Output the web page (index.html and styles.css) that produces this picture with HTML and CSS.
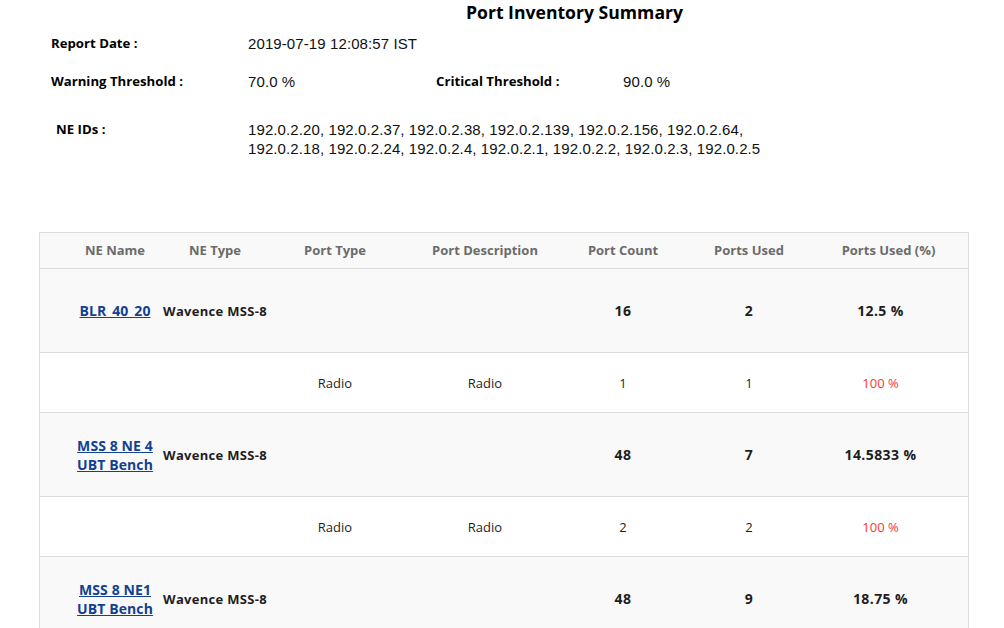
FILE: index.html
```html
<!DOCTYPE html>
<html>
<head>
<meta charset="utf-8">
<title>Port Inventory Summary</title>
<link rel="stylesheet" href="styles.css">
</head>
<body>
<div class="report">
  <h1 class="title">Port Inventory Summary</h1>
  <div class="info">
    <div class="label">Report Date :</div>
    <div class="value span3">2019-07-19 12:08:57 IST</div>

    <div class="label">Warning Threshold :</div>
    <div class="value">70.0 %</div>
    <div class="label">Critical Threshold :</div>
    <div class="value">90.0 %</div>

    <div class="label indent">NE IDs :</div>
    <div class="value span3 ids">192.0.2.20, 192.0.2.37, 192.0.2.38, 192.0.2.139, 192.0.2.156, 192.0.2.64,<br>192.0.2.18, 192.0.2.24, 192.0.2.4, 192.0.2.1, 192.0.2.2, 192.0.2.3, 192.0.2.5</div>
  </div>

  <div class="table-wrap">
    <table class="inv">
      <colgroup>
        <col class="c1"><col class="c2"><col class="c3"><col class="c4"><col class="c5"><col class="c6"><col class="c7">
      </colgroup>
      <thead>
        <tr>
          <th class="first">NE Name</th>
          <th>NE Type</th>
          <th>Port Type</th>
          <th>Port Description</th>
          <th>Port Count</th>
          <th>Ports Used</th>
          <th class="last">Ports Used (%)</th>
        </tr>
      </thead>
      <tbody>
        <tr class="ne">
          <td class="first"><a href="#" class="ne-link">BLR_40_20</a></td>
          <td>Wavence MSS-8</td>
          <td></td>
          <td></td>
          <td class="num">16</td>
          <td class="num">2</td>
          <td class="num last">12.5 %</td>
        </tr>
        <tr class="port">
          <td class="first"></td>
          <td></td>
          <td>Radio</td>
          <td>Radio</td>
          <td>1</td>
          <td>1</td>
          <td class="last crit">100 %</td>
        </tr>
        <tr class="ne">
          <td class="first"><a href="#" class="ne-link">MSS 8 NE 4 UBT Bench</a></td>
          <td>Wavence MSS-8</td>
          <td></td>
          <td></td>
          <td class="num">48</td>
          <td class="num">7</td>
          <td class="num last">14.5833 %</td>
        </tr>
        <tr class="port">
          <td class="first"></td>
          <td></td>
          <td>Radio</td>
          <td>Radio</td>
          <td>2</td>
          <td>2</td>
          <td class="last crit">100 %</td>
        </tr>
        <tr class="ne">
          <td class="first"><a href="#" class="ne-link">MSS 8 NE1 UBT Bench</a></td>
          <td>Wavence MSS-8</td>
          <td></td>
          <td></td>
          <td class="num">48</td>
          <td class="num">9</td>
          <td class="num last">18.75 %</td>
        </tr>
        <tr class="port">
          <td class="first"></td>
          <td></td>
          <td>Radio</td>
          <td>Radio</td>
          <td>2</td>
          <td>2</td>
          <td class="last crit">100 %</td>
        </tr>
      </tbody>
    </table>
  </div>
</div>
</body>
</html>
```

FILE: styles.css
```css
html, body {
  margin: 0;
  padding: 0;
  background: #ffffff;
}

body {
  font-family: "Open Sans", "Noto Sans", sans-serif;
  color: #000;
}

.report {
  width: 1004px;
}

.title {
  margin: 0;
  padding: 0 0 0 145px;
  height: 24px;
  text-align: center;
  font-family: "Open Sans", sans-serif;
  font-weight: 700;
  font-size: 17.6px;
  line-height: 24px;
  color: #000;
}

.info {
  display: grid;
  grid-template-columns: 197px 188px 187px 1fr;
  padding-left: 51px;
  margin-top: 10px;
}

.label {
  font-family: "Open Sans", sans-serif;
  font-weight: 700;
  font-size: 13.2px;
  line-height: 19px;
  color: #000;
  margin-bottom: 19px;
}

.label.indent {
  padding-left: 5px;
  margin-top: 10px;
}

.value {
  font-family: "Liberation Sans", Arial, sans-serif;
  font-size: 15px;
  letter-spacing: 0.1px;
  line-height: 19px;
  color: #111;
  margin-bottom: 19px;
}

.value.span3 {
  grid-column: span 3;
}

.value.ids {
  margin-top: 10px;
}

.table-wrap {
  margin: 55px 0 0 39px;
  width: 928px;
  border: 1px solid #dddddd;
  border-bottom: none;
}

.inv {
  width: 928px;
  border-collapse: collapse;
  table-layout: fixed;
  font-family: "Open Sans", "Noto Sans", sans-serif;
  font-size: 13px;
}

.c1 { width: 123px; }
.c2 { width: 104px; }
.c3 { width: 136px; }
.c4 { width: 164px; }
.c5 { width: 112px; }
.c6 { width: 140px; }
.c7 { width: 149px; }

.inv th {
  height: 33px;
  padding: 0 0 2px 0;
  background: #f9f9f9;
  color: #6b6b6b;
  font-weight: 700;
  text-align: center;
  white-space: nowrap;
  border-bottom: 1px solid #dcdcdc;
}

.inv td {
  padding: 0;
  text-align: center;
  white-space: nowrap;
  color: #1e1e1e;
  border-bottom: 1px solid #dcdcdc;
}

.inv .first {
  padding-left: 27px;
}

.inv th.last {
  padding-right: 10px;
}

.inv td.last {
  padding-right: 26px;
}

.inv tr.ne td {
  height: 83px;
  background: #f9f9f9;
  font-weight: 700;
  letter-spacing: 0.3px;
}

.inv tr.ne td.num {
  font-size: 14px;
  letter-spacing: 0.4px;
}

.inv tr.port td {
  height: 59px;
  background: #ffffff;
  font-weight: 400;
}

.ne-link {
  display: inline-block;
  max-width: 80px;
  white-space: normal;
  font-size: 14px;
  letter-spacing: 0.1px;
  color: #124191;
  text-decoration: underline;
  line-height: 19px;
}

.inv td.crit {
  color: #ff3333;
}
```
